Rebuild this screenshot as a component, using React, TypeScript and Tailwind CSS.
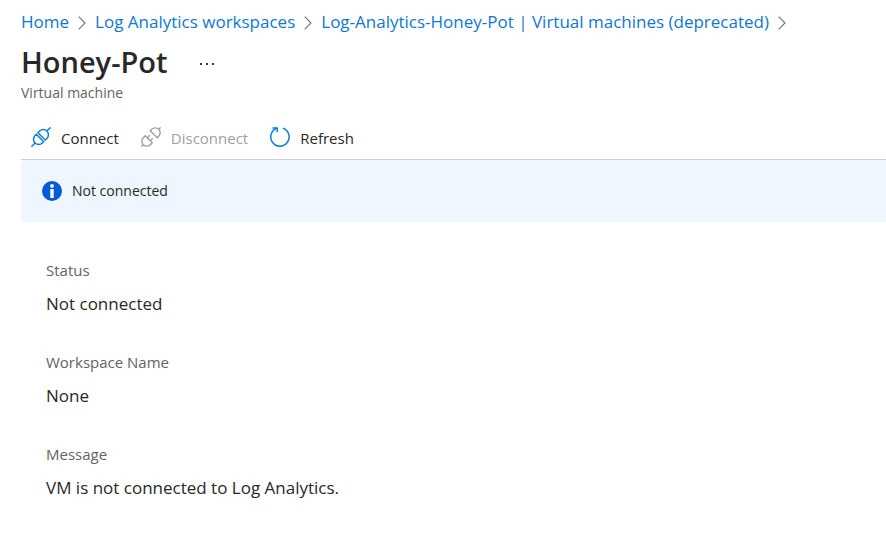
import { Fragment } from "react";

const crumbs = [
  "Home",
  "Log Analytics workspaces",
  "Log-Analytics-Honey-Pot | Virtual machines (deprecated)",
];

const details = [
  { label: "Status", value: "Not connected" },
  { label: "Workspace Name", value: "None" },
  { label: "Message", value: "VM is not connected to Log Analytics." },
];

function Chevron() {
  return (
    <svg aria-hidden="true" width="8" height="14" viewBox="0 0 8 14" fill="none" stroke="#75736f" strokeWidth="1.1" className="mt-px shrink-0">
      <path d="M.7.7 7 7 .7 13.3" />
    </svg>
  );
}

function ConnectIcon() {
  return (
    <svg aria-hidden="true" width="20" height="20" viewBox="0 0 20 20" fill="none" stroke="#0f7fd8" strokeWidth="1.5" className="mb-1 shrink-0">
      <g transform="rotate(45 10 10)">
        <path d="M10-3.6V1.6M10 23.6v-5.2" />
        <path d="M4.8 9.1V6.8a5.2 5.2 0 0 1 10.4 0v2.3ZM4.8 11.4v1.8a5.2 5.2 0 0 0 10.4 0v-1.8Z" />
      </g>
    </svg>
  );
}

function DisconnectIcon() {
  return (
    <svg aria-hidden="true" width="20" height="20" viewBox="0 0 20 20" fill="none" stroke="#a19f9d" strokeWidth="1.4" className="mb-1 shrink-0">
      <g transform="rotate(45 10 10)">
        <path d="M10-3.6V-.9M10 23.6v-2.7" />
        <path d="M5 6.1V4.1a5 5 0 0 1 10 0v2ZM5 13.3v2.6a5 5 0 0 0 10 0v-2.6Z" />
        <path d="M8 13.3V9.6M12 13.3V9.6" />
      </g>
    </svg>
  );
}

function RefreshIcon() {
  return (
    <svg aria-hidden="true" width="20" height="20" viewBox="0 0 20 20" fill="none" stroke="#0f7fd8" strokeWidth="1.5" className="mb-1 shrink-0">
      <path d="M12.8 1.2a9.2 9.2 0 1 1-6 .1" />
      <path d="M2.4.9h4.8v4.4" />
    </svg>
  );
}

function InfoIcon() {
  return (
    <svg aria-hidden="true" width="20" height="20" viewBox="0 0 20 20" className="shrink-0">
      <circle cx="10" cy="10" r="10" fill="#015cda" />
      <circle cx="10" cy="4.9" r="1.9" fill="#fff" />
      <path d="M8.3 8h3.4v9H8.3z" fill="#fff" />
    </svg>
  );
}

export default function App() {
  return (
    <main className="bg-white pt-2 pl-[21px] font-['Open_Sans','Noto_Sans',sans-serif] text-[#292827]">
      <nav aria-label="Breadcrumb" className="flex h-7 items-center gap-[9px] text-[17px] whitespace-nowrap text-[#0f78d4]">
        {crumbs.map((crumb) => (
          <Fragment key={crumb}>
            <a href="#" className="hover:underline">{crumb}</a>
            <Chevron />
          </Fragment>
        ))}
      </nav>

      <header>
        <div className="flex h-12 items-center gap-8 pt-1">
          <h1 className="text-[29px] leading-10 font-semibold">Honey-Pot</h1>
          <button type="button" aria-label="More actions" className="flex h-8 w-4 items-center justify-center">
            <svg aria-hidden="true" width="16" height="4" viewBox="0 0 16 4" fill="#3b3a39" className="mt-1">
              <path d="M1 1h2v2H1zM7 1h2v2H7zM13 1h2v2h-2z" />
            </svg>
          </button>
        </div>
        <p className="text-sm leading-[18px] text-[#656361]">Virtual machine</p>
      </header>

      <div role="toolbar" aria-label="Commands" className="mt-4 flex h-[42px] items-center gap-[22px] border-b border-[#d2d0ce] pl-[10px] text-[15px]">
        <button type="button" className="flex items-center gap-[10px]">
          <ConnectIcon />
          Connect
        </button>
        <button type="button" disabled className="flex items-center gap-[10px] text-[#a19f9d]">
          <DisconnectIcon />
          Disconnect
        </button>
        <button type="button" className="flex items-center gap-[10px]">
          <RefreshIcon />
          Refresh
        </button>
      </div>

      <div role="status" className="flex h-[62px] items-center gap-[10px] rounded-l-sm bg-[#eff6ff] pl-[21px] text-sm">
        <InfoIcon />
        Not connected
      </div>

      <dl className="grid gap-8 pt-9 pl-[25px]">
        {details.map(({ label, value }) => (
          <div key={label}>
            <dt className="text-[15px] leading-6 text-[#656361]">{label}</dt>
            <dd className="mt-2 text-[17px] leading-7">{value}</dd>
          </div>
        ))}
      </dl>
    </main>
  );
}
